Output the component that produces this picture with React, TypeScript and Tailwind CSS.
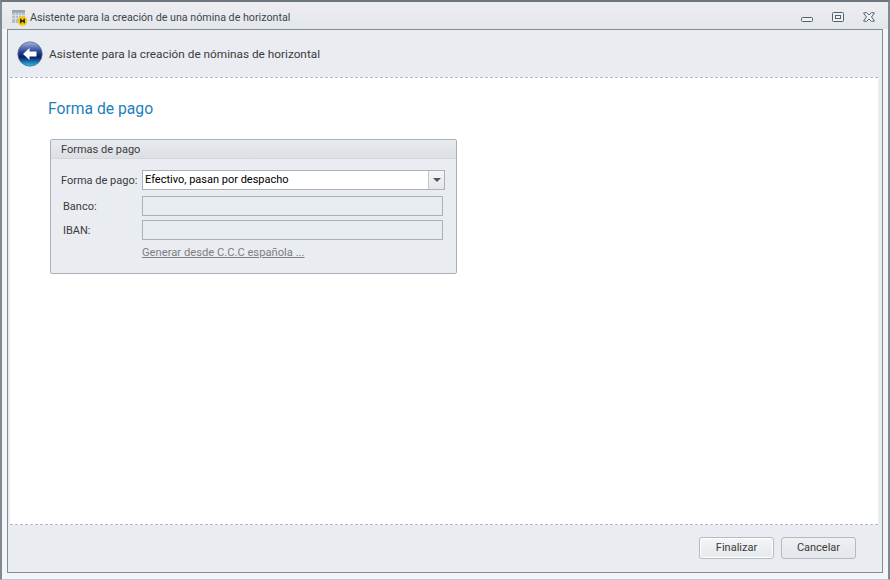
const uiFont = 'font-["Roboto",sans-serif]'

const BackIcon = () => (
  <svg width="26" height="26" viewBox="0 0 26 26" aria-hidden>
    <defs>
      <linearGradient id="orb" x1="0" y1="0" x2="0" y2="1">
        <stop offset="0" stopColor="#a9b7de" />
        <stop offset="0.4" stopColor="#2a4796" />
        <stop offset="0.62" stopColor="#0a1c63" />
        <stop offset="1" stopColor="#25c6f0" />
      </linearGradient>
    </defs>
    <circle cx="13" cy="13" r="12.2" fill="url(#orb)" stroke="#5e6f92" strokeWidth="0.8" />
    <path d="M6 13 12.5 7V10.5H19.5V15.5H12.5V19Z" fill="#fff" />
  </svg>
)

const AppIcon = () => (
  <svg width="18" height="16" viewBox="0 0 18 16" aria-hidden>
    <rect x="0" y="0" width="13" height="13" fill="#b3bec9" />
    <rect x="0" y="0" width="13" height="2.5" fill="#98a6b3" />
    <path d="M0 5.5H13M0 8.5H13M3.5 3V13M6.5 3V13M9.5 3V13" stroke="#d6dde3" strokeWidth="1" />
    <circle cx="10.5" cy="11" r="4.8" fill="#f8c80c" />
    <path d="M8.8 8.7V13.3M12.2 8.7V13.3M8.8 11H12.2" stroke="#111" strokeWidth="1.3" />
  </svg>
)

const WindowButtons = () => (
  <div className="flex items-center gap-[19px] pt-[5px] pr-[13px]">
    <svg width="12" height="12" viewBox="0 0 12 12" aria-hidden>
      <rect x="0.5" y="5.5" width="11" height="4" rx="1" fill="#eef0f2" stroke="#56606a" />
    </svg>
    <svg width="12" height="12" viewBox="0 0 12 12" aria-hidden>
      <rect x="0.5" y="0.5" width="11" height="9" rx="1" fill="#eef0f2" stroke="#56606a" />
      <rect x="3.5" y="3.5" width="5" height="3" fill="none" stroke="#56606a" />
    </svg>
    <svg width="12" height="12" viewBox="0 0 12 12" aria-hidden>
      <path d="M.5 1 3.5.5 6 3 8.5.5 11.5 1 8.5 5 11.5 9 8.5 9.5 6 7 3.5 9.5.5 9 3.5 5Z" fill="#eef0f2" stroke="#56606a" />
    </svg>
  </div>
)

const FormRow = ({ label }: { label: string }) => (
  <div className="flex h-[20px] items-center">
    <span className="w-[91px] pt-[2px] pl-[12px] text-[11px] text-[#3b3b3b]">{label}</span>
    <div className="h-[20px] w-[301px] border border-[#abb1b8] bg-[#e9ecf0]" />
  </div>
)

export default function App() {
  return (
    <div className={`flex h-[580px] w-[890px] flex-col border-x-2 border-t-2 border-b border-x-[#7f8a95] border-t-[#6d7780] border-b-[#c4c8cd] bg-[#f4f5f6] ${uiFont}`}>
      {/* title bar */}
      <div className="flex h-[27px] shrink-0 items-center justify-between bg-gradient-to-b from-[#eceef0] to-[#e4e7ea]">
        <div className="flex items-center pt-[5px] pl-[10px]">
          <AppIcon />
          <span className="text-[10.7px] text-[#3c4650]">Asistente para la creación de una nómina de horizontal</span>
        </div>
        <WindowButtons />
      </div>

      <div className="flex min-h-0 flex-1 flex-col px-[5px] pb-[6px]">
        <div className="flex min-h-0 flex-1 flex-col border border-[#858c94] bg-[#e9ecf0]">
          {/* wizard header */}
          <div className="flex h-[47px] shrink-0 items-center gap-[6px] pl-[9px]">
            <BackIcon />
            <span className="pt-[2px] text-[11.8px] text-[#3c3c3c]">Asistente para la creación de nóminas de horizontal</span>
          </div>

          {/* wizard page */}
          <div className="mr-[4px] ml-[2px] min-h-0 flex-1 border-y border-dashed border-y-[#b4b9bf] bg-white px-[38px] pt-[21px]">
            <h1 className="text-[15.7px] leading-[20px] font-normal text-[#1e7fc0]">Forma de pago</h1>
            <div className="mt-[20px] ml-[2px] w-[407px] rounded-[2px] border border-[#a9afb6] bg-[#e9ecf0]">
              <div className="flex h-[19px] items-center border-b border-b-[#d3d7db] bg-gradient-to-b from-[#e9ecef] to-[#dcdfe3] pt-[2px] pl-[10px] text-[11px] text-[#3b3b3b]">
                Formas de pago
              </div>
              <div className="flex flex-col pt-[11px] pb-[13px]">
                <div className="flex h-[20px] items-center">
                  <span className="w-[91px] pt-[2px] pl-[10px] text-[11px] whitespace-nowrap text-[#3b3b3b]">Forma de pago:</span>
                  <div className="flex h-[20px] w-[303px] items-center justify-between border border-[#abb1b8] bg-white">
                    <span className="pt-[1px] pl-[2px] text-[11px] text-black">Efectivo, pasan por despacho</span>
                    <div className="flex h-full w-[16px] items-center justify-center border-l border-l-[#c4c8cd] bg-gradient-to-b from-[#f5f6f7] to-[#e4e7ea]">
                      <span className="h-0 w-0 border-x-[4px] border-t-[4px] border-x-transparent border-t-[#4c5560]" />
                    </div>
                  </div>
                </div>
                <div className="mt-[6px]">
                  <FormRow label="Banco:" />
                </div>
                <div className="mt-[4px]">
                  <FormRow label="IBAN:" />
                </div>
                <div className="mt-[4px] pl-[91px]">
                  <a className="block pt-[1px] text-[11.2px] leading-[15px] text-[#7d7f82] underline">Generar desde C.C.C española ...</a>
                </div>
              </div>
            </div>
          </div>

          {/* wizard footer */}
          <div className="flex h-[47px] shrink-0 items-start justify-end gap-[7px] pt-[12px] pr-[26px]">
            <button className="h-[22px] w-[75px] rounded-[3px] border border-[#b4bac0] bg-gradient-to-b from-[#f3f5f7] to-[#e6e9ed] text-[11px] text-[#3b3b3b] shadow-[inset_0_0_0_1px_#fff]">
              Finalizar
            </button>
            <button className="h-[22px] w-[75px] rounded-[3px] border border-[#b4bac0] bg-gradient-to-b from-[#eef0f2] to-[#e3e6ea] text-[11px] text-[#3b3b3b]">
              Cancelar
            </button>
          </div>
        </div>
      </div>
    </div>
  )
}
